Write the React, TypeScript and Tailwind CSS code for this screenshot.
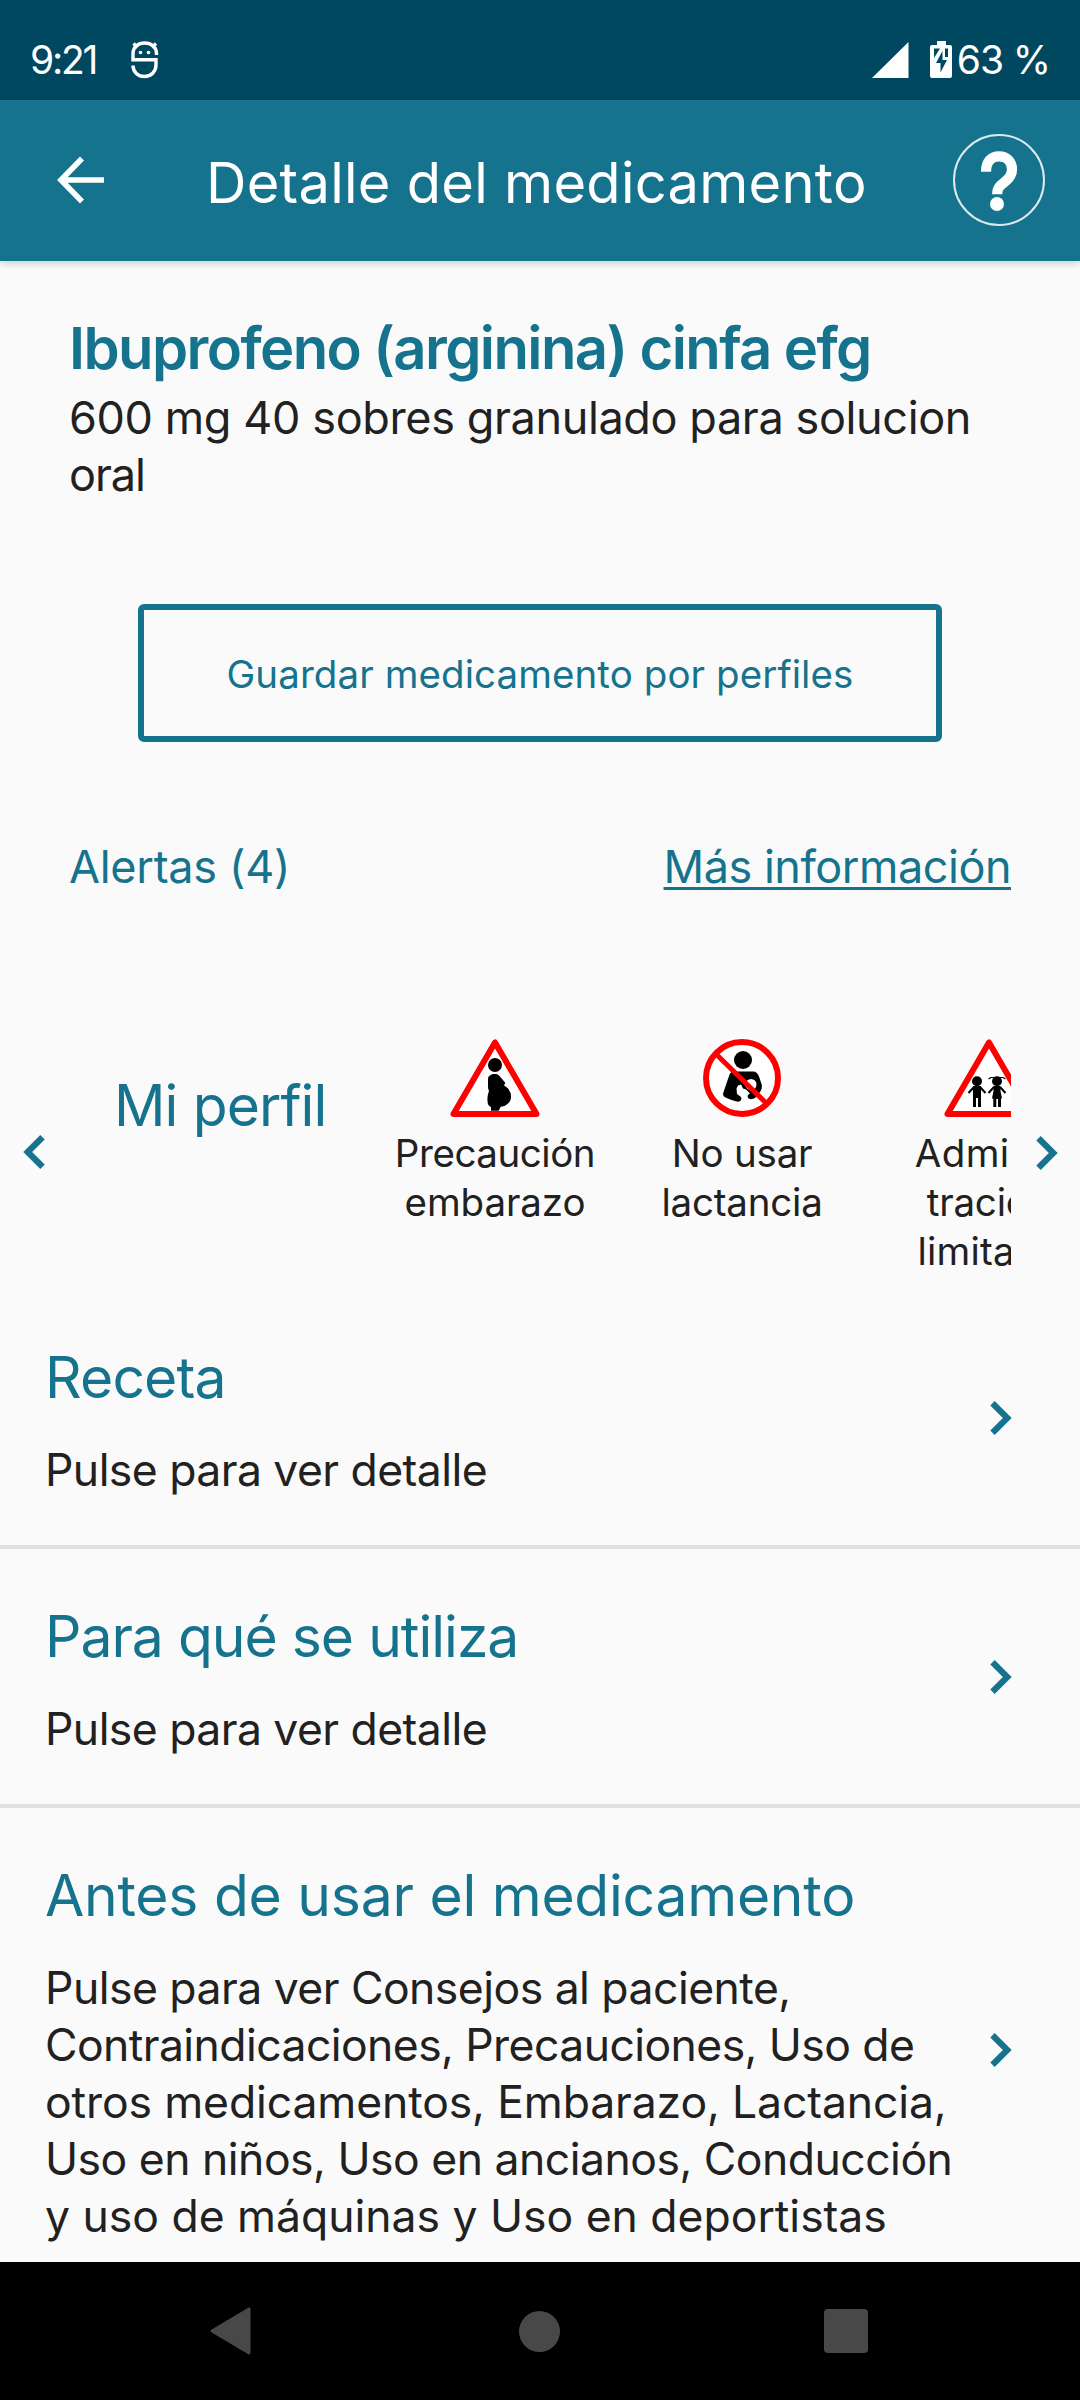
import type { ReactNode } from "react";

type Line = { text: string; tracking: string };

type Alert = {
  icon: ReactNode;
  lines: Line[];
};

type Section = {
  title: string;
  titleTracking: string;
  lines: Line[];
};

const ALERTS: Alert[] = [
  {
    icon: <PregnancyIcon />,
    lines: [
      { text: "Precaución", tracking: "tracking-[-0.45px]" },
      { text: "embarazo", tracking: "tracking-[-0.1px]" },
    ],
  },
  {
    icon: <BreastfeedingIcon />,
    lines: [
      { text: "No usar", tracking: "tracking-[-0.2px]" },
      { text: "lactancia", tracking: "tracking-[-0.2px]" },
    ],
  },
  {
    icon: <ChildrenIcon />,
    lines: [
      { text: "Adminis", tracking: "tracking-[0.4px]" },
      { text: "tración", tracking: "tracking-[-0.2px]" },
      { text: "limitada", tracking: "tracking-[0.2px]" },
    ],
  },
];

const SECTIONS: Section[] = [
  {
    title: "Receta",
    titleTracking: "tracking-[-0.85px]",
    lines: [{ text: "Pulse para ver detalle", tracking: "tracking-[-0.55px]" }],
  },
  {
    title: "Para qué se utiliza",
    titleTracking: "tracking-[-1px]",
    lines: [{ text: "Pulse para ver detalle", tracking: "tracking-[-0.55px]" }],
  },
  {
    title: "Antes de usar el medicamento",
    titleTracking: "tracking-[-0.25px]",
    lines: [
      { text: "Pulse para ver Consejos al paciente,", tracking: "tracking-[-0.52px]" },
      { text: "Contraindicaciones, Precauciones, Uso de", tracking: "tracking-[-0.57px]" },
      { text: "otros medicamentos, Embarazo, Lactancia,", tracking: "tracking-[-0.12px]" },
      { text: "Uso en niños, Uso en ancianos, Conducción", tracking: "tracking-[-0.5px]" },
      { text: "y uso de máquinas y Uso en deportistas", tracking: "tracking-[-0.02px]" },
    ],
  },
];

function PregnancyIcon() {
  return (
    <svg width="90" height="78" viewBox="0 0 90 78">
      <path d="M45 3.5 3.5 75h83Z" fill="#fff" stroke="#f00" strokeWidth="6" strokeLinejoin="round" />
      <circle cx="45" cy="26" r="7" />
      <path d="M38 40c0-3 3-5 7-5 2 0 3 .5 4 1.500l6.300 7.200-1.300 2.800c3 1.500 4.500 3 5.500 5.500 1.500 2 1.500 4 1.500 6 0 3-1.500 5.500-3.700 7-2 1.800-4 2.700-6.600 2.700l-2 4H41v-3.400c-2-1.300-3.300-3-3.300-4.600-.7-4.500 0-8 1.300-11.700-1-2-1-4-1-6Z" />
    </svg>
  );
}

function BreastfeedingIcon() {
  return (
    <svg width="78" height="78" viewBox="0 0 78 78">
      <circle cx="39" cy="39" r="36" fill="#fff" stroke="#f00" strokeWidth="6" />
      <circle cx="40" cy="21" r="9" />
      <path d="M30 32.500h20c3 0 5 2 6 5l2.700 8c.5 3 0 5-1.700 7.500L52 59c-2 1.500-5.500 1.500-7 0-1-2 0-4 2-4.500l-4-4-3-1-2-4-3 1-1.500 3 .5 5.500 4 3c1 2 0 4.500-3 4.700-4-.5-9-2.500-12.500-4.200-2-1-2.700-2.500-2.300-4.500L26 37c.8-2.500 2-4 4-4.500Z" />
      <circle cx="48" cy="45.500" r="5.500" fill="#fff" />
      <path d="M13.500 15.500 63 64" stroke="#f00" strokeWidth="5" />
    </svg>
  );
}

function ChildrenIcon() {
  return (
    <svg width="90" height="78" viewBox="0 0 90 78">
      <path d="M45 3.5 3.5 75h83Z" fill="#fff" stroke="#f00" strokeWidth="6" strokeLinejoin="round" />
      <circle cx="33" cy="42.300" r="5" />
      <path d="M29 47h8v21h-3v-9h-2v9h-3Z" />
      <path d="m30 48-5.500 6M36 48l5.500 6M50 48l-5.500 6M56 48l5.500 6" stroke="#000" strokeWidth="2" />
      <circle cx="53" cy="42.300" r="5" />
      <path d="M49.500 47h7v5l1.500 7.500h-1V68h-3v-8h-1.700v8h-3v-8.500h-1.300l1.500-7.500Z" />
      <path d="m44.500 40 2.500-1.500h3M61.500 40 59 38.500h-3" fill="none" stroke="#000" strokeWidth="1.200" />
    </svg>
  );
}

function Chevron({ flip = false }: { flip?: boolean }) {
  return (
    <svg width="22" height="34" viewBox="0 0 22 34" className={flip ? "rotate-180" : ""}>
      <path d="M2.500 2.200 17.300 17 2.500 31.800" fill="none" stroke="#15738d" strokeWidth="6.200" />
    </svg>
  );
}

function StatusBar() {
  return (
    <div className="flex h-[100px] shrink-0 items-center bg-[#004860] pt-5 pr-[30px] pl-[30px] text-[39px] leading-[48px] text-white">
      <span className="w-[68px] whitespace-nowrap tracking-[-2.2px]">9:21</span>
      <svg width="28" height="38" viewBox="0 0 28 38" className="ml-[33px]" fill="none" stroke="#fff">
        <path d="M25.500 14v-1.500C25.500 6 20 2 13.600 2S2 6 2 12.500v6.300h23v5c0 7-5 11.700-11.500 11.700S2 31 2 24.500" strokeWidth="3.400" />
        <path d="m2.500 2.500 4 4M25 2.500l-4 4" strokeWidth="3.200" />
        <circle cx="9.500" cy="11.500" r="1.800" fill="#fff" stroke="none" />
        <circle cx="17.500" cy="11.500" r="1.800" fill="#fff" stroke="none" />
      </svg>
      <div className="ml-auto flex items-center">
        <svg width="37" height="36" viewBox="0 0 37 36">
          <path d="M0 36 36.500 0v36Z" fill="#fff" />
        </svg>
        <svg width="22" height="38" viewBox="0 0 22 38" className="mr-[5px] ml-[21px]">
          <path d="M7 0h9v4h4a2 2 0 0 1 2 2v29a2 2 0 0 1-2 2H2a2 2 0 0 1-2-2V6a2 2 0 0 1 2-2h5Z" fill="#fff" />
          <path d="M4 7.500h6L4 17ZM15 7.500v8.500h3V7.500ZM12.500 10v9H17l-6.500 12.500V22H6Z" fill="#004860" />
        </svg>
        <span className="whitespace-nowrap tracking-[-1.1px]">63 %</span>
      </div>
    </div>
  );
}

function AppBar() {
  return (
    <header className="z-10 flex h-[161px] shrink-0 items-center bg-[#15738d] pr-[35px] pl-[57px] text-white shadow-[0_2px_8px_rgba(0,0,0,0.2)]">
      <svg width="48" height="48" viewBox="0 0 48 48" className="mb-px" fill="none" stroke="#fff" strokeWidth="5.600">
        <path d="M25 2.500 4 24l21 21.500M4 24h43" />
      </svg>
      <h1 className="ml-[101px] pt-1 text-[56px] leading-[70px] tracking-[0.27px] whitespace-nowrap">Detalle del medicamento</h1>
      <svg width="92" height="92" viewBox="0 0 92 92" className="mb-px ml-auto" fill="none" stroke="#fff">
        <circle cx="46" cy="46" r="45" strokeWidth="2" strokeOpacity="0.85" />
        <path d="M33 37.700C33 28 38 22.300 46 22.300s13 5.700 13 13.200c0 6-3 9-6.700 12-5 4-8.100 6-8.100 12.700" strokeWidth="10.200" />
        <circle cx="44" cy="70" r="7" fill="#fff" stroke="none" />
      </svg>
    </header>
  );
}

function AlertCarousel() {
  return (
    <div className="mt-[142px] flex h-[251px] items-start">
      <button className="mt-[96px] ml-[23px]">
        <Chevron flip />
      </button>
      <h2 className="mt-[32px] ml-[69px] w-[257px] shrink-0 text-[57px] leading-[70px] tracking-[-0.9px] whitespace-nowrap text-[#15738d]">
        Mi perfil
      </h2>
      <div className="flex w-[640px] overflow-hidden">
        {ALERTS.map((alert, i) => (
          <div key={i} className="flex w-[247px] shrink-0 flex-col items-center">
            {alert.icon}
            <div className="mt-[12px] flex flex-col items-center pl-px text-[38.500px] leading-[49px] text-[#212121]">
              {alert.lines.map((line) => (
                <span key={line.text} className={line.tracking}>
                  {line.text}
                </span>
              ))}
            </div>
          </div>
        ))}
      </div>
      <button className="mt-[97px] ml-[25px]">
        <Chevron />
      </button>
    </div>
  );
}

function SectionRow({ section }: { section: Section }) {
  return (
    <section className="flex items-center justify-between border-b-4 border-[#e0e0e0] pt-[53px] pr-[68px] pb-[46px] pl-[45px]">
      <div className="whitespace-nowrap">
        <h3 className={`text-[57px] leading-[70px] text-[#15738d] ${section.titleTracking}`}>{section.title}</h3>
        <p className="mt-[29px] text-[44.500px] leading-[57px] text-[#212121]">
          {section.lines.map((line) => (
            <span key={line.text} className={`block ${line.tracking}`}>
              {line.text}
            </span>
          ))}
        </p>
      </div>
      <div className="pb-[7px]">
        <Chevron />
      </div>
    </section>
  );
}

function NavBar() {
  return (
    <nav className="z-10 flex h-[138px] shrink-0 items-center justify-between bg-black pr-[212px] pl-[210px]">
      <svg width="42" height="48" viewBox="0 0 42 48">
        <path d="M2 24 39 2v44Z" fill="#484848" stroke="#484848" strokeWidth="3" strokeLinejoin="round" />
      </svg>
      <div className="ml-[3px] size-[41px] rounded-full bg-[#484848]" />
      <div className="size-[44px] rounded-[4px] bg-[#484848]" />
    </nav>
  );
}

export default function App() {
  return (
    <div className="flex h-[2400px] w-[1080px] flex-col overflow-hidden bg-[#fafafa] font-['Inter',sans-serif]">
      <StatusBar />
      <AppBar />
      <main className="flex-1 overflow-hidden pt-[52px]">
        <div className="px-[69px] whitespace-nowrap">
          <h2 className="text-[58px] leading-[70px] font-semibold tracking-[-1.6px] text-[#15738d]">
            Ibuprofeno (arginina) cinfa efg
          </h2>
          <p className="mt-[6px] text-[45px] leading-[57px] text-[#212121]">
            <span className="block tracking-[-0.38px]">600 mg 40 sobres granulado para solucion</span>
            <span className="block tracking-[-1.1px]">oral</span>
          </p>
          <button className="mx-[69px] mt-[101px] flex h-[138px] w-[804px] items-center justify-center rounded-[6px] border-6 border-[#15738d] pt-1 text-[38.500px] tracking-[0.08px] text-[#15738d]">
            Guardar medicamento por perfiles
          </button>
          <div className="mt-[95px] flex justify-between text-[45px] leading-[60px] text-[#15738d]">
            <span className="tracking-[-0.3px]">Alertas (4)</span>
            <a className="tracking-[-0.48px] underline decoration-[3px] underline-offset-[4px]">Más información</a>
          </div>
        </div>
        <AlertCarousel />
        {SECTIONS.map((section) => (
          <SectionRow key={section.title} section={section} />
        ))}
      </main>
      <NavBar />
    </div>
  );
}
